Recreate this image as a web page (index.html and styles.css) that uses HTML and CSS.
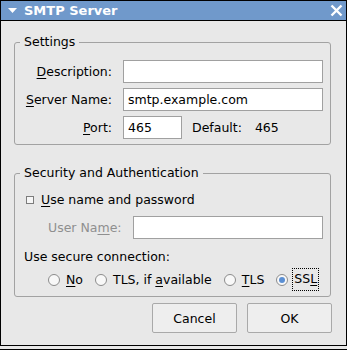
FILE: index.html
```html
<!DOCTYPE html>
<html lang="en">
  <head>
    <meta charset="utf-8">
    <meta name="viewport" content="width=device-width, initial-scale=1">
    <link rel="stylesheet" href="styles.css">
  </head>

  <body>
    <div class="window">

      <div class="titlebar">
        <svg class="menu_arrow" width="9" height="6" viewBox="0 0 9 6">
          <path d="M0 0 H9 L4.5 5 Z" fill="#fff"/>
        </svg>
        <span class="title">SMTP Server</span>
        <svg class="close_btn" width="13" height="13" viewBox="0 0 13 13">
          <path d="M1.5 1.5 L11.5 11.5 M11.5 1.5 L1.5 11.5" stroke="#fff" stroke-width="2.4"/>
        </svg>
      </div>

      <div class="content">

        <fieldset class="group">
          <legend>Settings</legend>
          <div class="form_grid">
            <label class="field_label"><u>D</u>escription:</label>
            <input class="entry" type="text">

            <label class="field_label"><u>S</u>erver Name:</label>
            <input class="entry" type="text" value="smtp.example.com">

            <label class="field_label"><u>P</u>ort:</label>
            <div class="port_row">
              <input class="entry port" type="text" value="465">
              <span class="default_label">Default:</span>
              <span class="default_value">465</span>
            </div>
          </div>
        </fieldset>

        <fieldset class="group security">
          <legend>Security and Authentication</legend>

          <div class="check_row">
            <span class="checkbox"></span>
            <span><u>U</u>se name and password</span>
          </div>

          <div class="user_row">
            <label class="user_label">User Na<u>m</u>e:</label>
            <input class="entry" type="text" disabled>
          </div>

          <div class="secure_label">Use secure connection:</div>

          <div class="radio_row">
            <span class="radio_item"><span class="radio"></span><span class="radio_text"><u>N</u>o</span></span>
            <span class="radio_item"><span class="radio"></span><span class="radio_text">TLS, if <u>a</u>vailable</span></span>
            <span class="radio_item"><span class="radio"></span><span class="radio_text"><u>T</u>LS</span></span>
            <span class="radio_item"><span class="radio checked"></span><span class="radio_text focused">SS<u>L</u></span></span>
          </div>
        </fieldset>

        <div class="buttons">
          <button>Cancel</button>
          <button>OK</button>
        </div>

      </div>
    </div>
    <div class="below"></div>
  </body>

</html>
```

FILE: styles.css
```css
html {
  width: 100%;
  height: 100%;
}

body {
  margin: 0;
  background-color: #e8e8e8;
  font-family: 'DejaVu Sans', sans-serif;
  font-size: 12.5px;
  line-height: 16px;
  color: #000;
}

u {
  text-underline-offset: 2px;
}

.window {
  width: 347px;
  height: 346px;
  box-sizing: border-box;
  border: 1px solid #000;
  display: flex;
  flex-direction: column;
}

.titlebar {
  height: 20px;
  box-sizing: border-box;
  background-color: #7099cb;
  border-bottom: 1px solid #000;
  display: flex;
  align-items: center;
  color: #fff;
}

.menu_arrow {
  margin-left: 7px;
  margin-top: 1px;
}

.title {
  margin-left: 7px;
  font-size: 13px;
  font-weight: bold;
  flex: 1;
}

.close_btn {
  margin-right: 3px;
}

.content {
  flex: 1;
  padding: 13px 15px 0 13px;
  display: flex;
  flex-direction: column;
}

.group {
  margin: 0;
  min-width: 0;
  border: 1px solid #a2a2a2;
  border-radius: 3px;
  padding: 10px 7px 5px 5px;
}

.group legend {
  padding: 0 4px;
  line-height: 16px;
}

.form_grid {
  display: grid;
  grid-template-columns: 88px 1fr;
  column-gap: 11px;
  row-gap: 5px;
  padding-left: 4px;
  align-items: center;
}

.field_label {
  text-align: right;
  white-space: nowrap;
}

.entry {
  height: 23px;
  box-sizing: border-box;
  border: 1px solid #a0a0a0;
  background: #fff;
  padding: 0 4px;
  margin: 0;
  font-family: 'DejaVu Sans', sans-serif;
  font-size: 12.5px;
  color: #000;
  outline: none;
  min-width: 0;
}

.port_row {
  display: flex;
  align-items: center;
}

.entry.port {
  width: 59px;
}

.default_label {
  margin-left: 10px;
}

.default_value {
  margin-left: 13px;
}

.security {
  margin-top: 20px;
  padding-top: 11px;
}

.check_row {
  display: flex;
  align-items: center;
  padding-left: 6px;
}

.checkbox {
  width: 8px;
  height: 8px;
  box-sizing: border-box;
  border: 1px solid #7c7c7c;
  background: #f6f6f6;
  margin-right: 7px;
}

.user_row {
  display: flex;
  align-items: center;
  margin-top: 8px;
  padding-left: 28px;
}

.user_label {
  width: 85px;
  flex: none;
  color: #8f8f8f;
}

.user_row .entry {
  flex: 1;
}

.secure_label {
  margin-top: 10px;
  padding-left: 4px;
}

.radio_row {
  display: flex;
  align-items: center;
  gap: 12px;
  margin-top: 3px;
  padding-left: 28px;
  height: 23px;
}

.radio_item {
  display: flex;
  align-items: center;
}

.radio {
  width: 12px;
  height: 12px;
  box-sizing: border-box;
  border: 1px solid #8c8c8c;
  border-radius: 50%;
  background: #f8f8f8;
  display: flex;
  align-items: center;
  justify-content: center;
}

.radio.checked::after {
  content: "";
  width: 6px;
  height: 6px;
  border-radius: 50%;
  background: #5b8fd3;
}

.radio_text {
  margin-left: 6px;
}

.radio_text.focused {
  margin-left: 4px;
  padding: 2px 1px 3px 1px;
  border: 1px dotted #000;
}

.buttons {
  display: flex;
  justify-content: flex-end;
  gap: 10px;
  margin-top: 6px;
  margin-right: -1px;
}

button {
  width: 85px;
  height: 30px;
  box-sizing: border-box;
  border: 1px solid #a9a9a9;
  border-radius: 2px;
  background-color: #eeeeee;
  font-family: 'DejaVu Sans', sans-serif;
  font-size: 12.5px;
  color: #000;
  padding: 0;
}

.below {
  width: 347px;
  height: 4px;
  box-sizing: border-box;
  border-bottom: 1px solid #000;
}
```
